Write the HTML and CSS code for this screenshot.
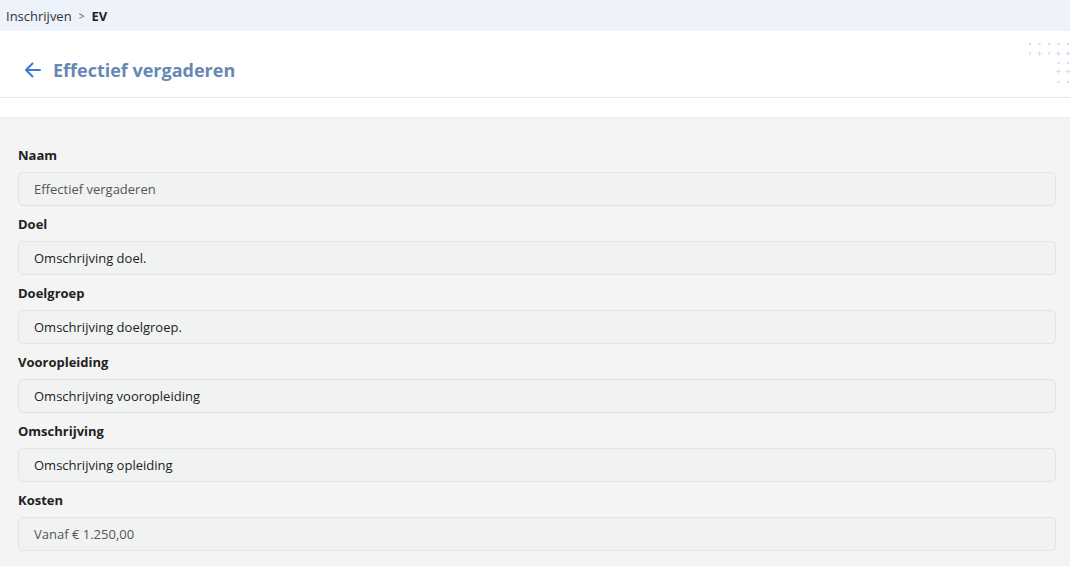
FILE: index.html
```html
<!DOCTYPE html>
<html lang="nl">
<head>
  <meta charset="UTF-8" />
  <meta name="viewport" content="width=device-width, initial-scale=1" />
  <title>Effectief vergaderen</title>
  <link rel="stylesheet" href="styles.css">
</head>
<body>
  <nav class="crumbs">
    <span>Inschrijven</span>
    <span class="sep">&gt;</span>
    <strong>EV</strong>
  </nav>

  <header class="page-head">
    <a class="back" href="#" aria-label="Terug">
      <svg width="18" height="18" viewBox="0 0 18 18" fill="none" stroke="#3b78d8" stroke-width="2" stroke-linecap="round" stroke-linejoin="round">
        <path d="M16 9H2M8.5 2.5L2 9l6.5 6.5"/>
      </svg>
    </a>
    <h1>Effectief vergaderen</h1>

    <!-- decorative dot grid -->
    <svg class="dots" width="42" height="42" viewBox="0 0 42 42" fill="#d3e0f2">
      <rect x="0" y="0" width="2" height="2"/><rect x="9.5" y="0" width="2" height="2"/><rect x="19" y="0" width="2" height="2"/><rect x="28.5" y="0" width="2" height="2"/><rect x="38" y="0" width="2" height="2"/>
      <rect x="0" y="9.5" width="2" height="2"/><path d="M10.5 8v5M8 10.5h5" stroke="#d3e0f2" stroke-width="1"/><rect x="19" y="9.5" width="2" height="2"/><path d="M29.5 8v5M27 10.5h5" stroke="#d3e0f2" stroke-width="1"/><path d="M39 8v5M36.5 10.5h5" stroke="#d3e0f2" stroke-width="1"/>
      <rect x="28.5" y="19" width="2" height="2"/><rect x="38" y="19" width="2" height="2"/>
      <path d="M29.5 26v5M27 28.5h5" stroke="#d3e0f2" stroke-width="1"/><path d="M39 26v5M36.5 28.5h5" stroke="#d3e0f2" stroke-width="1"/>
      <rect x="28.5" y="38" width="2" height="2"/><rect x="38" y="38" width="2" height="2"/>
    </svg>
  </header>

  <div class="spacer"></div>

  <main class="form">
    <div class="field">
      <label>Naam</label>
      <div class="input muted">Effectief vergaderen</div>
    </div>
    <div class="field">
      <label>Doel</label>
      <div class="input">Omschrijving doel.</div>
    </div>
    <div class="field">
      <label>Doelgroep</label>
      <div class="input">Omschrijving doelgroep.</div>
    </div>
    <div class="field">
      <label>Vooropleiding</label>
      <div class="input">Omschrijving vooropleiding</div>
    </div>
    <div class="field">
      <label>Omschrijving</label>
      <div class="input">Omschrijving opleiding</div>
    </div>
    <div class="field">
      <label>Kosten</label>
      <div class="input muted">Vanaf € 1.250,00</div>
    </div>
  </main>
</body>
</html>
```

FILE: styles.css
```css
body {
  margin: 0;
  font-family: 'Open Sans', 'Noto Sans', sans-serif;
  font-size: 13px;
  color: #222;
  background: #f4f4f4;
}
.crumbs {
  height: 31px;
  display: flex;
  align-items: center;
  gap: 7px;
  padding: 0 6px;
  background: #edf2fb;
  color: #333;
}
.crumbs .sep {
  font-size: 10px;
  color: #555;
}
.crumbs strong {
  color: #222;
}
.page-head {
  position: relative;
  height: 55px;
  display: flex;
  align-items: center;
  padding: 11px 0 0 24px;
  background: #fff;
  border-bottom: 1px solid #e6e6e6;
}
.back {
  display: flex;
  margin-right: 11px;
}
.page-head h1 {
  margin: 0;
  font-size: 18px;
  font-weight: 700;
  color: #6788b4;
}
.dots {
  position: absolute;
  top: 12px;
  right: -1px;
}
.spacer {
  height: 19px;
  background: #fff;
}
.form {
  padding: 28px 14px 14px 18px;
  border-top: 1px solid #ececec;
}
.field label {
  display: block;
  font-weight: 700;
  line-height: 18px;
  margin-bottom: 8px;
}
.input {
  height: 32px;
  display: flex;
  align-items: center;
  padding: 0 15px;
  background: #f1f2f2;
  border: 1px solid #e2e3e3;
  border-radius: 5px;
  margin-bottom: 9px;
}
.input.muted {
  color: #555;
}
```
